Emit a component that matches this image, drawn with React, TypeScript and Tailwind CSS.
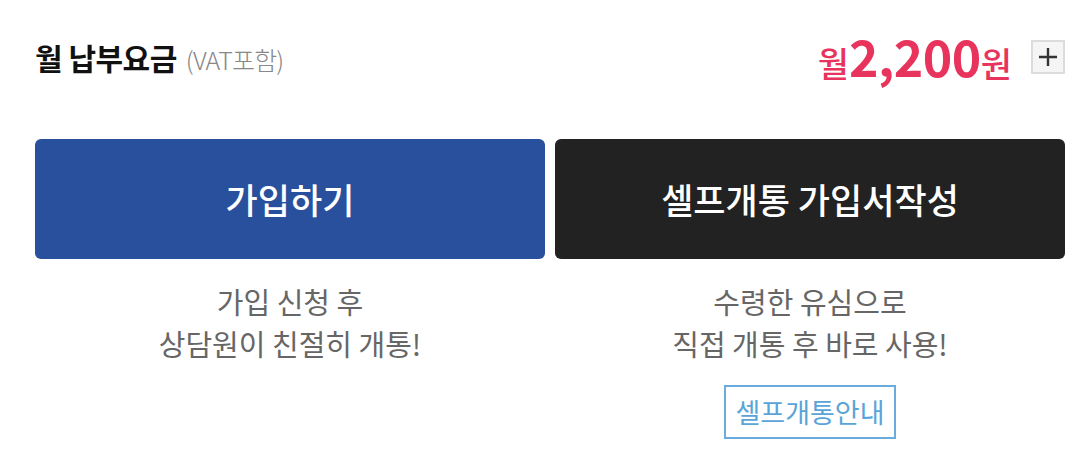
const font = "font-['Noto_Sans_CJK_KR','Noto_Sans',sans-serif]";

function PriceHeader() {
  return (
    <div className="mb-[25px] flex h-[114px] items-center justify-between">
      <h2 className="flex items-baseline gap-[9px]">
        <span className="text-[30px] font-bold tracking-[-0.5px] text-[#111]">월 납부요금</span>
        <span className="text-[25px] font-light tracking-[-0.8px] text-[#888]">(VAT포함)</span>
      </h2>
      <div className="flex items-center gap-[19px]">
        <p className="flex items-baseline pt-[4px] text-[#e8345c]">
          <span className="text-[34px] font-medium">월</span>
          <span className="text-[50px] leading-none font-bold tracking-[-0.5px]">2,200</span>
          <span className="text-[34px] font-medium">원</span>
        </p>
        <button className="flex h-[34px] w-[34px] shrink-0 items-center justify-center border-2 border-[#dcdcdc] bg-[#f5f5f5]">
          <svg width="20" height="20" viewBox="0 0 20 20" fill="none">
            <path d="M10 1v18M1 10h18" stroke="#333" strokeWidth="2.4" />
          </svg>
        </button>
      </div>
    </div>
  );
}

export default function App() {
  return (
    <div className={`${font} h-[458px] w-[1078px] bg-white pr-[13px] pl-[35px]`}>
      <PriceHeader />

      <div className="grid grid-cols-2 gap-[10px]">
        {/* 가입하기 */}
        <div className="flex flex-col items-center">
          <button className="flex h-[120px] w-full items-center justify-center rounded-[6px] bg-[#29509c] text-[35px] font-medium text-white">
            가입하기
          </button>
          <p className="mt-[21px] text-center text-[29px] leading-[42px] text-[#666]">
            가입 신청 후<br />상담원이 친절히 개통!
          </p>
        </div>

        {/* 셀프개통 */}
        <div className="flex flex-col items-center">
          <button className="flex h-[120px] w-full items-center justify-center rounded-[6px] bg-[#222] text-[35px] font-medium text-white">
            셀프개통 가입서작성
          </button>
          <p className="mt-[21px] text-center text-[29px] leading-[42px] text-[#666]">
            수령한 유심으로<br />직접 개통 후 바로 사용!
          </p>
          <a className="mt-[21px] flex h-[54px] w-[172px] items-center justify-center border-2 border-[#6aabdb] text-[27px] text-[#5ba4d8]">
            셀프개통안내
          </a>
        </div>
      </div>
    </div>
  );
}
